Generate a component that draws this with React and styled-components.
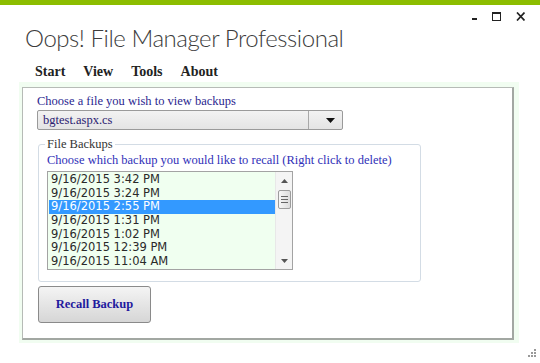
import React from "react";
import styled, { createGlobalStyle } from "styled-components";

const Global = createGlobalStyle`
  html, body { margin: 0; padding: 0; background: #ffffff; }
  #root { width: 540px; height: 363px; }
`;

const Window = styled.div`
  position: relative;
  width: 540px;
  height: 363px;
  overflow: hidden;
  background: #ffffff;
  display: flex;
  flex-direction: column;
`;

const TopStripe = styled.div`
  height: 5px;
  background: #8cbd00;
  flex: none;
`;

const Header = styled.div`
  height: 57px;
  flex: none;
  display: flex;
  justify-content: space-between;
  align-items: flex-start;
  padding-left: 25px;
  padding-right: 15px;
`;

const Title = styled.h1`
  margin: 17px 0 0 0;
  font-family: Lato, "Open Sans", sans-serif;
  font-weight: 300;
  font-size: 24px;
  letter-spacing: -0.45px;
  line-height: 31px;
  color: #3c3c3c;
`;

const Controls = styled.div`
  display: flex;
  gap: 13px;
  margin-top: 7px;
  color: #222;
`;

const Menu = styled.nav`
  height: 20px;
  flex: none;
  display: flex;
  gap: 18px;
  padding-left: 35px;
`;

const MenuItem = styled.span`
  font-family: "Liberation Serif", serif;
  font-weight: bold;
  font-size: 14px;
  line-height: 20px;
  color: #222;
`;

const Frame = styled.div`
  margin-left: 19px;
  width: 500px;
  height: 261px;
  box-sizing: border-box;
  padding: 5px 5px 3px 3px;
  background: #f1fdf1;
  flex: none;
`;

const Panel = styled.div`
  height: 100%;
  box-sizing: border-box;
  background: #ffffff;
  border-style: solid;
  border-color: #b6bbb6 #a2a7a2 #a2a7a2 #b6bbb6;
  border-width: 1px 2px 2px 1px;
  padding: 5px 0 0 14px;
  display: flex;
  flex-direction: column;
  align-items: flex-start;
`;

const Label = styled.div`
  font-family: "Liberation Serif", serif;
  font-size: 12.5px;
  line-height: 16px;
  color: ${(p) => p.$color || "#2b1f8f"};
  white-space: nowrap;
`;

const Select = styled.div`
  margin-top: 1px;
  width: 306px;
  height: 20px;
  box-sizing: border-box;
  border: 1px solid #9a9a9a;
  border-radius: 2px;
  background: linear-gradient(#f2f2f2, #e4e4e4);
  display: flex;
  align-items: stretch;
`;

const SelectValue = styled.div`
  flex: 1;
  padding-left: 5px;
  font-family: "Liberation Serif", serif;
  font-size: 12.5px;
  line-height: 18px;
  color: #2a2070;
`;

const SelectButton = styled.div`
  width: 34px;
  border-left: 1px solid #a8a8a8;
  display: flex;
  align-items: center;
  justify-content: flex-end;
  padding-right: 7px;
  box-sizing: border-box;
`;

const GroupBox = styled.fieldset`
  margin: 6px 0 0 1px;
  padding: 0 0 11px 8px;
  width: 383px;
  box-sizing: border-box;
  border: 1px solid #d3dce5;
  border-radius: 3px;
  min-width: 0;
`;

const Legend = styled.legend`
  padding: 0 2px;
  margin-left: -2px;
  font-family: "Liberation Serif", serif;
  font-size: 12.5px;
  line-height: 16px;
  color: #333;
`;

const ListBox = styled.div`
  margin-top: 3px;
  width: 246px;
  height: 99px;
  box-sizing: border-box;
  border: 1px solid #a3a3a3;
  background: #f0fff0;
  display: flex;
`;

const Items = styled.ul`
  flex: 1;
  list-style: none;
  margin: 0;
  padding: 1px 0 0 1px;
  overflow: hidden;
`;

const Item = styled.li`
  height: 13.7px;
  padding-left: 2px;
  font-family: "DejaVu Sans", Verdana, sans-serif;
  font-size: 11.5px;
  line-height: 13.7px;
  white-space: nowrap;
  color: ${(p) => (p.$selected ? "#ffffff" : "#2a2a2a")};
  background: ${(p) => (p.$selected ? "#3399ff" : "transparent")};
`;

const ScrollBar = styled.div`
  width: 17px;
  background: #f4f4f4;
  border-left: 1px solid #e8e8e8;
  box-sizing: border-box;
  display: flex;
  flex-direction: column;
  align-items: center;
`;

const Arrow = styled.div`
  height: 17px;
  width: 100%;
  display: flex;
  align-items: center;
  justify-content: center;
`;

const Thumb = styled.div`
  margin-top: 1px;
  width: 13px;
  height: 19px;
  box-sizing: border-box;
  border: 1px solid #9c9c9c;
  border-radius: 2px;
  background: linear-gradient(90deg, #f6f6f6, #dcdcdc);
  display: flex;
  flex-direction: column;
  justify-content: center;
  align-items: center;
  gap: 2px;
`;

const Grip = styled.span`
  width: 7px;
  height: 1px;
  background: #666;
`;

const Spacer = styled.div`
  flex: 1;
`;

const Button = styled.button`
  margin: 4px 0 0 1px;
  width: 113px;
  height: 37px;
  border: 1px solid #8a8a8a;
  border-radius: 3px;
  background: linear-gradient(#f4f4f4, #d6d6d6);
  font-family: "Liberation Serif", serif;
  font-weight: bold;
  font-size: 12.5px;
  color: #1f1a9e;
  padding: 0;
`;

const ResizeGrip = styled.svg`
  position: absolute;
  right: 4px;
  bottom: 6px;
`;

const items = [
  "9/16/2015 3:42 PM",
  "9/16/2015 3:24 PM",
  "9/16/2015 2:55 PM",
  "9/16/2015 1:31 PM",
  "9/16/2015 1:02 PM",
  "9/16/2015 12:39 PM",
  "9/16/2015 11:04 AM",
];

export default function App() {
  return (
    <>
      <Global />
      <Window>
        <TopStripe />
        <Header>
          <Title>Oops! File Manager Professional</Title>
          <Controls>
            <svg width="9" height="9" viewBox="0 0 9 9">
              <rect x="2" y="6" width="5" height="2" fill="#222" />
            </svg>
            <svg width="9" height="9" viewBox="0 0 9 9">
              <rect x="0.5" y="0.5" width="8" height="8" fill="none" stroke="#222" />
              <rect x="0" y="0" width="9" height="2" fill="#222" />
            </svg>
            <svg width="11" height="9" viewBox="0 0 11 9">
              <path d="M3 0.5 L10.5 8.5 M10.5 0.5 L3 8.5" stroke="#222" strokeWidth="1.7" />
            </svg>
          </Controls>
        </Header>
        <Menu>
          <MenuItem>Start</MenuItem>
          <MenuItem>View</MenuItem>
          <MenuItem>Tools</MenuItem>
          <MenuItem>About</MenuItem>
        </Menu>
        <Frame>
          <Panel>
            <Label>Choose a file you wish to view backups</Label>
            <Select>
              <SelectValue>bgtest.aspx.cs</SelectValue>
              <SelectButton>
                <svg width="9" height="5" viewBox="0 0 9 5">
                  <path d="M0 0 H9 L4.5 5 Z" fill="#111" />
                </svg>
              </SelectButton>
            </Select>
            <GroupBox>
              <Legend>File Backups</Legend>
              <Label $color="#3030b8">
                Choose which backup you would like to recall (Right click to delete)
              </Label>
              <ListBox>
                <Items>
                  {items.map((t, i) => (
                    <Item key={t} $selected={i === 2}>
                      {t}
                    </Item>
                  ))}
                </Items>
                <ScrollBar>
                  <Arrow>
                    <svg width="7" height="4" viewBox="0 0 7 4">
                      <path d="M0 4 L3.5 0 L7 4 Z" fill="#555" />
                    </svg>
                  </Arrow>
                  <Thumb>
                    <Grip />
                    <Grip />
                    <Grip />
                  </Thumb>
                  <Spacer />
                  <Arrow>
                    <svg width="7" height="4" viewBox="0 0 7 4">
                      <path d="M0 0 L7 0 L3.5 4 Z" fill="#555" />
                    </svg>
                  </Arrow>
                </ScrollBar>
              </ListBox>
            </GroupBox>
            <Button>Recall Backup</Button>
          </Panel>
        </Frame>
        <ResizeGrip width="9" height="9" viewBox="0 0 9 9">
          <rect x="7" y="1" width="2" height="2" fill="#999" />
          <rect x="4" y="4" width="2" height="2" fill="#999" />
          <rect x="7" y="4" width="2" height="2" fill="#999" />
          <rect x="1" y="7" width="2" height="2" fill="#999" />
          <rect x="4" y="7" width="2" height="2" fill="#999" />
          <rect x="7" y="7" width="2" height="2" fill="#999" />
        </ResizeGrip>
      </Window>
    </>
  );
}
